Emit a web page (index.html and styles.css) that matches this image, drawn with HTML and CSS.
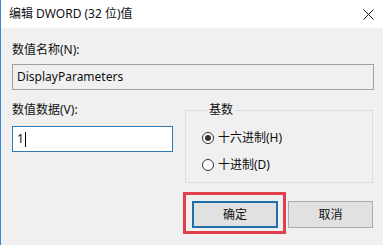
FILE: index.html
```html
<!DOCTYPE html>
<html lang="zh-CN">
<head>
<meta charset="utf-8">
<title>编辑 DWORD (32 位)值</title>
<link rel="stylesheet" href="styles.css">
</head>
<body>
<div class="window">
  <div class="titlebar">
    <span class="title">编辑 DWORD (32 位)值</span>
    <svg class="close" width="11" height="11" viewBox="0 0 11 11"><path d="M0.5 0.5 L10.5 10.5 M10.5 0.5 L0.5 10.5" stroke="#111" stroke-width="1" fill="none"/></svg>
  </div>
  <div class="content">
    <div class="label">数值名称(N):</div>
    <div class="field readonly">DisplayParameters</div>
    <div class="lower">
      <div class="col">
        <div class="label">数值数据(V):</div>
        <div class="field focused"><span>1</span><span class="caret"></span></div>
      </div>
      <fieldset class="group">
        <legend>基数</legend>
        <div class="radio"><span class="dot checked"></span><span>十六进制(H)</span></div>
        <div class="radio"><span class="dot"></span><span>十进制(D)</span></div>
      </fieldset>
    </div>
    <div class="buttons">
      <span class="highlight"><span class="btn default">确定</span></span>
      <span class="btn">取消</span>
    </div>
  </div>
</div>
</body>
</html>
```
FILE: styles.css
```css
* { box-sizing: border-box; }
html, body { margin: 0; padding: 0; }
body {
  width: 383px;
  height: 245px;
  overflow: hidden;
  font-family: "Noto Sans", "Noto Sans CJK SC", sans-serif;
  font-size: 12px;
  line-height: 16px;
  color: #111;
  background: #f0f0f0;
}
.window {
  height: 245px;
  border-left: 1px solid #3b86d1;
  background: #f0f0f0;
}
.titlebar {
  height: 28px;
  background: #fff;
  display: flex;
  align-items: center;
  justify-content: space-between;
  padding: 0 9px 0 8px;
}
.title { font-size: 12px; }
.content { padding: 14px 9px 0 11px; }
.field {
  height: 26px;
  margin-top: 6px;
  padding: 0 4px;
  display: flex;
  align-items: center;
  border: 1px solid #a0a0a0;
}
.readonly { background: #f0f0f0; }
.focused { background: #fff; border-color: #2f7db8; margin-top: 8px; }
.caret { width: 1px; height: 15px; background: #000; margin-left: 1px; }
.lower {
  display: grid;
  grid-template-columns: 161px 188px;
  column-gap: 12px;
  margin-top: 12px;
}
.group {
  margin: 0;
  padding: 12px 0 9px 16px;
  border: 1px solid #dcdcdc;
  min-width: 0;
}
.group legend {
  padding: 0 2px;
  margin-left: 5px;
  line-height: 16px;
}
.radio {
  display: flex;
  align-items: center;
  height: 16px;
  gap: 4px;
}
.radio + .radio { margin-top: 11px; }
.dot {
  width: 12px;
  height: 12px;
  border: 1px solid #333;
  border-radius: 50%;
  background: #fff;
  display: flex;
  align-items: center;
  justify-content: center;
}
.dot.checked::after {
  content: "";
  width: 6px;
  height: 6px;
  border-radius: 50%;
  background: #333;
}
.buttons {
  display: flex;
  justify-content: flex-end;
  align-items: flex-start;
  gap: 2px;
  margin-top: 9px;
  margin-right: 1px;
}
.highlight {
  display: flex;
  border: 3px solid #e0414c;
  padding: 6px 5px 3px 6px;
}
.btn {
  width: 85px;
  height: 27px;
  margin-top: 9px;
  display: flex;
  align-items: center;
  justify-content: center;
  background: #e1e1e1;
  border: 1px solid #adadad;
}
.btn.default {
  width: 86px;
  margin-top: 0;
  border: 2px solid #1f6fab;
}
```
